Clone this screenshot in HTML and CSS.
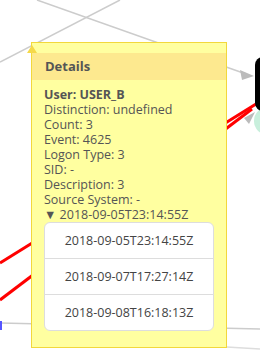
FILE: index.html
```html
<!DOCTYPE html>
<html lang="en">
<head>
    <meta charset="UTF-8">
    <title>Graph Details</title>
    <link rel="stylesheet" href="styles.css">
</head>
<body>
    <div class="canvas">
        <svg class="edges" width="260" height="350" viewBox="0 0 260 350">
            <line x1="37" y1="0" x2="246" y2="74" stroke="#ccc" stroke-width="1.5"/>
            <polygon points="254,76 240,70 242,80" fill="#bbb"/>
            <line x1="120" y1="0" x2="0" y2="62" stroke="#ccc" stroke-width="1.5"/>
            <line x1="0" y1="263" x2="256" y2="104" stroke="#f00" stroke-width="3"/>
            <line x1="0" y1="300" x2="252" y2="109" stroke="#f00" stroke-width="3"/>
            <circle cx="268" cy="121" r="14" fill="#c8efdc"/>
            <polygon points="255,112 244,118 249,124" fill="#bbb"/>
            <rect x="255" y="57" width="20" height="54" rx="8" fill="#000"/>
            <line x1="0" y1="323" x2="260" y2="329" stroke="#ccc" stroke-width="1.5"/>
            <line x1="60" y1="337" x2="260" y2="349" stroke="#ddd" stroke-width="1.5"/>
            <rect x="0" y="321" width="2" height="9" fill="#55f"/>
        </svg>

        <div class="tooltip">
            <span class="tip-arrow"></span>
            <div class="tip-head">Details</div>
            <div class="tip-body">
                <div class="user">User: USER_B</div>
                <div>Distinction: undefined</div>
                <div>Count: 3</div>
                <div>Event: 4625</div>
                <div>Logon Type: 3</div>
                <div>SID: -</div>
                <div>Description: 3</div>
                <div>Source System: -</div>
                <div class="toggle">&#9660; 2018-09-05T23:14:55Z</div>
                <ul class="times">
                    <li>2018-09-05T23:14:55Z</li>
                    <li>2018-09-07T17:27:14Z</li>
                    <li>2018-09-08T16:18:13Z</li>
                </ul>
            </div>
        </div>
    </div>
</body>
</html>
```
FILE: styles.css
```css
body {
    margin: 0;
    padding: 0;
    background-color: #fff;
    font-family: "Open Sans", "Noto Sans", sans-serif;
}
.canvas {
    position: relative;
    width: 260px;
    height: 350px;
    overflow: hidden;
}
.edges {
    position: absolute;
    top: 0;
    left: 0;
}
.tooltip {
    position: absolute;
    top: 42px;
    left: 31px;
    width: 194px;
    height: 294px;
    background-color: #ffffa0;
    border: 1px solid #f2d83c;
    color: #555;
    font-size: 12.5px;
    padding-top: 10px;
}
.tip-arrow {
    position: absolute;
    top: 2px;
    left: -5px;
    width: 0;
    height: 0;
    border-left: 5px solid transparent;
    border-right: 5px solid transparent;
    border-bottom: 8px solid #f5d94a;
}
.tip-head {
    background-color: #fde98f;
    font-weight: bold;
    font-size: 13px;
    padding: 5px 13px;
    height: 17px;
    line-height: 17px;
}
.tip-body {
    padding: 7px 12px 0 12px;
    line-height: 15px;
}
.user {
    font-weight: bold;
}
.times {
    list-style: none;
    margin: 0;
    padding: 0;
    background: #fff;
    border: 1px solid #ddd;
    border-radius: 6px;
    color: #444;
}
.times li {
    text-align: center;
    height: 35px;
    line-height: 35px;
    border-top: 1px solid #ddd;
}
.times li:first-child {
    border-top: none;
}
```
